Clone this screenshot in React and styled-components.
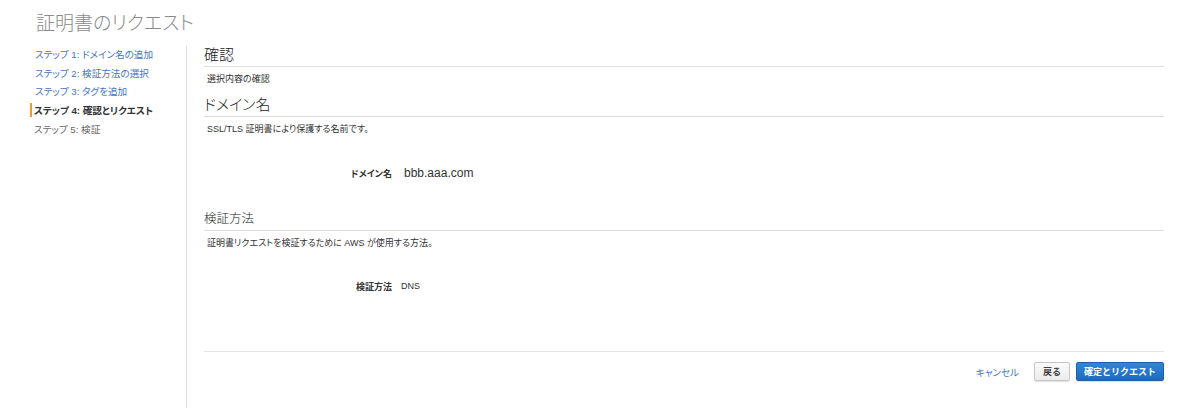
import * as React from "react";
import styled, { createGlobalStyle } from "styled-components";

const GlobalStyle = createGlobalStyle`
  body {
    margin: 0;
    background: #ffffff;
    font-family: "Liberation Sans", "Noto Sans CJK JP", sans-serif;
    font-feature-settings: "palt";
    color: #333333;
  }
`;

const Page = styled.div`
  width: 1200px;
  height: 408px;
  box-sizing: border-box;
  padding: 0 36px;
  overflow: hidden;
`;

const Title = styled.h1`
  margin: 0;
  padding-top: 13px;
  height: 46px;
  box-sizing: border-box;
  font-size: 19px;
  line-height: 21px;
  font-weight: 300;
  color: #8a8a8a;
`;

const Body = styled.div`
  display: flex;
  height: 362px;
`;

const Sidebar = styled.ul`
  width: 150px;
  margin: 0;
  padding: 0;
  list-style: none;
  border-right: 1px solid #dddddd;
`;

const Step = styled.li`
  height: 18.7px;
  line-height: 18.7px;
  font-size: 9.6px;
  white-space: nowrap;
  margin-left: ${(p) => (p.$shift ? "-2px" : "-1px")};
  color: ${(p) => (p.$active ? "#333333" : p.$link ? "#3f74c4" : "#666666")};
  font-weight: ${(p) => (p.$active ? 700 : 400)};

  &::before {
    content: "";
    display: ${(p) => (p.$active ? "inline-block" : "none")};
    width: 2px;
    height: 14px;
    margin-left: -4px;
    margin-right: 2px;
    vertical-align: -3px;
    background: #f29b2c;
  }
`;

const Content = styled.div`
  flex: 1;
  margin-left: 17px;
  display: flex;
  flex-direction: column;
`;

const SectionHead = styled.h2`
  margin: ${(p) => (p.$first ? "0" : "10px")} 0 0;
  height: 18px;
  line-height: 18px;
  padding-bottom: 2px;
  border-bottom: 1px solid #dddddd;
  font-size: ${(p) => p.$size || "15px"};
  font-weight: 300;
  color: #222222;
`;

const Desc = styled.p`
  margin: 0;
  padding: 5px 0 0 3px;
  line-height: 14px;
  font-size: 9px;
  color: #333333;
`;

const Field = styled.div`
  display: flex;
  align-items: center;
  height: 16px;
  padding: ${(p) => p.$pad};
`;

const FieldLabel = styled.span`
  width: 188px;
  text-align: right;
  font-size: 9px;
  font-weight: 700;
  color: #333333;
`;

const FieldValue = styled.span`
  margin-left: ${(p) => p.$gap};
  font-size: ${(p) => p.$size};
  color: #333333;
`;

const Footer = styled.div`
  margin-top: 57px;
  border-top: 1px solid #e3e3e3;
  padding-top: 10px;
  display: flex;
  justify-content: flex-end;
  align-items: center;
`;

const CancelLink = styled.a`
  font-size: 9.5px;
  color: #3f74c4;
  text-decoration: none;
  margin-right: 15px;
  cursor: pointer;
`;

const Button = styled.button`
  height: 19px;
  box-sizing: border-box;
  padding: 0 ${(p) => (p.$primary ? "7px" : "8px")};
  margin-left: ${(p) => (p.$primary ? "6px" : "0")};
  font-family: inherit;
  font-size: 9px;
  font-weight: 700;
  border-radius: 2px;
  border: 1px solid ${(p) => (p.$primary ? "#1d5fa8" : "#c6c6c6")};
  color: ${(p) => (p.$primary ? "#ffffff" : "#444444")};
  background: ${(p) =>
    p.$primary
      ? "linear-gradient(#2f86d9, #1f6ac0)"
      : "linear-gradient(#fafafa, #ececec)"};
  box-shadow: 0 1px 1px rgba(0, 0, 0, 0.12);
`;

const steps = [
  { label: "ステップ 1: ドメイン名の追加", link: true },
  { label: "ステップ 2: 検証方法の選択", link: true },
  { label: "ステップ 3: タグを追加", link: true },
  { label: "ステップ 4: 確認とリクエスト", active: true, shift: true },
  { label: "ステップ 5: 検証", shift: true },
];

export default function App() {
  return (
    <Page>
      <GlobalStyle />
      <Title>証明書のリクエスト</Title>
      <Body>
        <Sidebar>
          {steps.map((s) => (
            <Step key={s.label} $link={s.link} $active={s.active} $shift={s.shift}>
              {s.label}
            </Step>
          ))}
        </Sidebar>

        <Content>
          <SectionHead $first>確認</SectionHead>
          <Desc>選択内容の確認</Desc>

          <SectionHead>ドメイン名</SectionHead>
          <Desc>SSL/TLS 証明書により保護する名前です。</Desc>
          <Field $pad="29px 0">
            <FieldLabel>ドメイン名</FieldLabel>
            <FieldValue $gap="12px" $size="12px">bbb.aaa.com</FieldValue>
          </Field>

          <SectionHead $first $size="12.5px">検証方法</SectionHead>
          <Desc>証明書リクエストを検証するために AWS が使用する方法。</Desc>
          <Field $pad="28px 0 0">
            <FieldLabel>検証方法</FieldLabel>
            <FieldValue $gap="9px" $size="9px">DNS</FieldValue>
          </Field>

          <Footer>
            <CancelLink>キャンセル</CancelLink>
            <Button>戻る</Button>
            <Button $primary>確定とリクエスト</Button>
          </Footer>
        </Content>
      </Body>
    </Page>
  );
}
